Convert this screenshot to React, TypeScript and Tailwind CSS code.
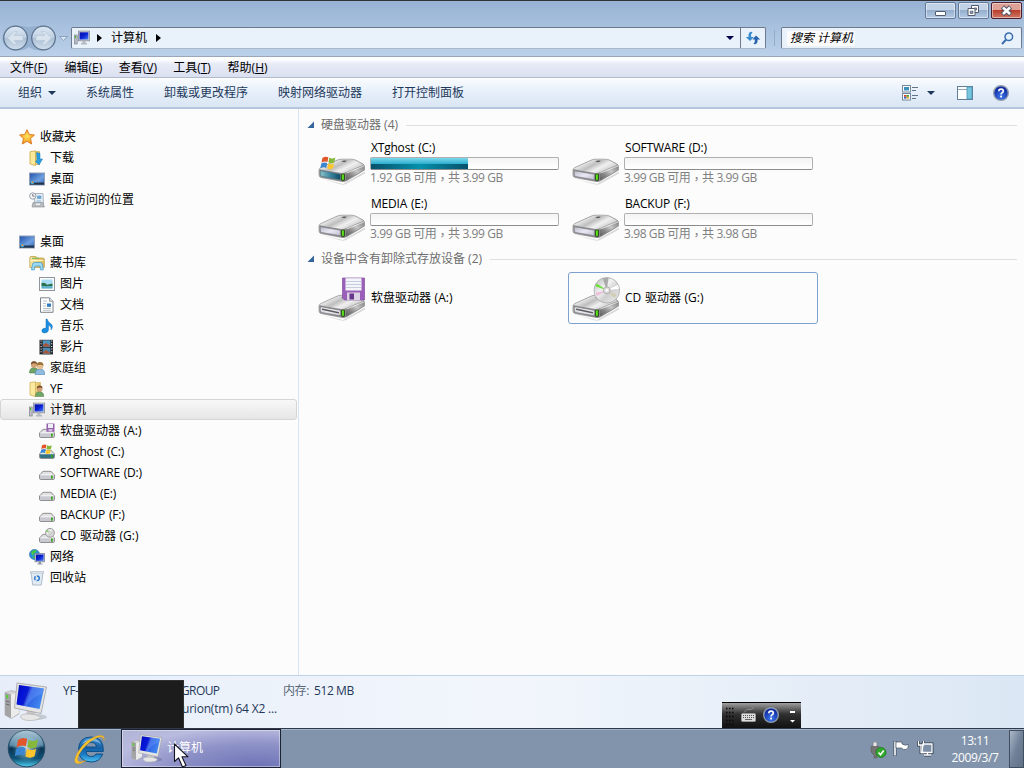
import React from "react";

type IconProps = { className?: string };

function Gradients() {
  return (
    <svg className="absolute size-0" aria-hidden="true">
      <defs>
        <linearGradient id="metal" x1="0" y1="0" x2="1" y2="1">
          <stop offset="0" stopColor="#b0b0b0" />
          <stop offset=".35" stopColor="#e2e2e2" />
          <stop offset=".55" stopColor="#bcbcbc" />
          <stop offset=".75" stopColor="#858585" />
          <stop offset="1" stopColor="#5a5a5a" />
        </linearGradient>
        <linearGradient id="lid" x1="0" y1="0" x2="1" y2=".6">
          <stop offset="0" stopColor="#acacac" />
          <stop offset=".3" stopColor="#e6e6e6" />
          <stop offset=".5" stopColor="#bebebe" />
          <stop offset=".7" stopColor="#f0f0f0" />
          <stop offset="1" stopColor="#c6c6c6" />
        </linearGradient>
        <linearGradient id="side" x1="0" y1="1" x2="1" y2="0">
          <stop offset="0" stopColor="#5f5f5f" />
          <stop offset=".3" stopColor="#858585" />
          <stop offset=".6" stopColor="#c6c6c6" />
          <stop offset="1" stopColor="#828282" />
        </linearGradient>
        <linearGradient id="face" x1="0" y1="0" x2="1" y2="1">
          <stop offset="0" stopColor="#b9b9c8" />
          <stop offset=".5" stopColor="#e9e8f4" />
          <stop offset="1" stopColor="#bdbdcc" />
        </linearGradient>
        <linearGradient id="teal" x1="0" y1="0" x2="1" y2="0">
          <stop offset="0" stopColor="#8fc0ca" />
          <stop offset=".5" stopColor="#3a87a0" />
          <stop offset="1" stopColor="#0f4c64" />
        </linearGradient>
        <linearGradient id="screen" x1="0" y1="0" x2="1" y2=".35">
          <stop offset="0" stopColor="#0008a8" />
          <stop offset=".3" stopColor="#0414d8" />
          <stop offset=".5" stopColor="#0a1cd0" />
          <stop offset=".56" stopColor="#2f5fe6" />
          <stop offset="1" stopColor="#3f86ee" />
        </linearGradient>
        <linearGradient id="smallScreen" x1="0" y1="0" x2="1" y2="1">
          <stop offset="0" stopColor="#0510a0" />
          <stop offset=".5" stopColor="#0a20d4" />
          <stop offset="1" stopColor="#4a80f0" />
        </linearGradient>
        <linearGradient id="desk" x1="0" y1="0" x2="1" y2="1">
          <stop offset="0" stopColor="#1e4fa8" />
          <stop offset=".6" stopColor="#6fa0e0" />
          <stop offset="1" stopColor="#2f62b4" />
        </linearGradient>
        <linearGradient id="folder" x1="0" y1="0" x2="1" y2="0">
          <stop offset="0" stopColor="#f7e9a6" />
          <stop offset="1" stopColor="#dcb958" />
        </linearGradient>
        <linearGradient id="orb" x1="0" y1="0" x2="0" y2="1">
          <stop offset="0" stopColor="#9dbccd" />
          <stop offset=".4" stopColor="#3d7596" />
          <stop offset=".5" stopColor="#0b3654" />
          <stop offset=".78" stopColor="#0f5478" />
          <stop offset="1" stopColor="#4ed2f2" />
        </linearGradient>
        <radialGradient id="orbGlow">
          <stop offset="0" stopColor="#fff" stopOpacity=".75" />
          <stop offset="1" stopColor="#9fe0ff" stopOpacity="0" />
        </radialGradient>
        <linearGradient id="navBall" x1="0" y1="0" x2="0" y2="1">
          <stop offset="0" stopColor="#dce7f3" />
          <stop offset=".48" stopColor="#c0d0e2" />
          <stop offset=".5" stopColor="#aabed4" />
          <stop offset="1" stopColor="#d2e0ee" />
        </linearGradient>
        <radialGradient id="blueBall" cx=".5" cy=".75" r=".7">
          <stop offset="0" stopColor="#3c78ee" />
          <stop offset="1" stopColor="#0a1f96" />
        </radialGradient>
        <linearGradient id="ie" x1="0" y1="0" x2="0" y2="1">
          <stop offset="0" stopColor="#3c8fd0" />
          <stop offset=".45" stopColor="#1560a6" />
          <stop offset=".7" stopColor="#1b7cc4" />
          <stop offset="1" stopColor="#4cc4f2" />
        </linearGradient>
        <radialGradient id="star" cx=".5" cy=".45" r=".6">
          <stop offset="0" stopColor="#ffe45c" />
          <stop offset="1" stopColor="#f38a18" />
        </radialGradient>
        <linearGradient id="disc" x1="0" y1="0" x2="1" y2="1">
          <stop offset="0" stopColor="#b5b5b5" />
          <stop offset=".4" stopColor="#f2f2f2" />
          <stop offset=".6" stopColor="#cfcfcf" />
          <stop offset="1" stopColor="#f0f0f0" />
        </linearGradient>
      </defs>
    </svg>
  );
}

function Flag() {
  return (
    <>
      <path d="M2 2Q5-.2 8.300 1.300L7.300 6.300Q4.200 5 1 7Z" fill="#e2562c" />
      <path d="M9.200 1.800Q12.500 3.600 15.600 1.600L14.500 6.800Q11.500 8.400 8.300 6.800Z" fill="#84b93c" />
      <path d="M.8 8Q4 6 7.100 7.400L6.100 12.500Q3 11.200-.2 13Z" fill="#3b86d0" />
      <path d="M8.100 7.900Q11.200 9.500 14.300 7.900L13.200 13Q10.200 14.800 7 13.200Z" fill="#fcc62c" />
    </>
  );
}

function DriveBody({ teal, slot }: { teal?: boolean; slot?: boolean }) {
  return (
    <>
      <path d="M4 21L25 26L47 13.500V15.500L28 26Q26 27.200 22 26.300Z" fill="#000" opacity=".14" />
      <path d="M1 12Q1 10.500 3 9.500L19 2.200Q21 1.200 24 1.200H33Q36 1.200 38 2.300L45 6Q46.500 7 46.500 8.500V12L29 22.500Q27 24 24 23.500L3 19.500Q1 19 1 17Z" fill="url(#metal)" stroke="#8a8a8a" strokeWidth=".7" />
      <path d="M2.500 10.300L20 2.600Q22 1.700 25 1.700H32.500Q35.500 1.700 37.500 2.700L45 6.700L27 14.300Q25 15.300 22 14.800L2.500 11.500Z" fill="url(#lid)" />
      <path d="M28 14.800L46 7.600V11.800L28 22.300Z" fill="url(#side)" />
      <path d="M28.500 15L46 8" stroke="#fff" strokeWidth=".9" opacity=".7" />
      <path d="M23 3.300Q26 1.800 29 2.800L26.500 4.200Z" fill="#555" />
      <path d="M1.400 11.300L21 14.800Q25 15.500 28 14.600V22.300Q26 23.800 24 23.300L3 19.300Q1.400 18.800 1.400 17Z" fill="#8b8b8d" />
      <path d="M2.300 12.700L22.300 16.300V21.800L3.600 18.400Q2.300 18 2.300 16.500Z" fill={teal ? "url(#teal)" : "url(#face)"} stroke={teal ? "#41707e" : "#77777f"} strokeWidth=".6" />
      {slot && (
        <>
          <path d="M4.500 15.200L20.500 18.700" stroke="#e8e8e8" strokeWidth="3.600" strokeLinecap="round" />
          <path d="M4.500 15.200L20.500 18.700" stroke="#5b5b60" strokeWidth="1.500" strokeLinecap="round" />
        </>
      )}
      <rect x="23.100" y="15.700" width="3.800" height="7" rx="1" fill="#254414" />
      <rect x="23.900" y="16.400" width="2" height="5.400" fill="#5be01c" />
    </>
  );
}

function BigDrive({ kind }: { kind: string }) {
  const media = kind === "floppy" || kind === "cd";
  return (
    <svg className="h-12 w-12 shrink-0" viewBox="0 0 48 48">
      <g transform={media ? "translate(0 20)" : "translate(0 18)"}>
        <DriveBody teal={kind === "system"} slot={media} />
      </g>
      {kind === "system" && (
        <g transform="translate(2.500 16) scale(.95)">
          <Flag />
        </g>
      )}
      {kind === "floppy" && (
        <g>
          <path d="M24.500 4H46.500V26H26.500L24.500 24Z" fill="#9a5fb8" stroke="#8350a2" strokeWidth=".7" />
          <rect x="27.500" y="4.200" width="16" height="12.300" fill="#f3f5fa" />
          <path d="M28 7.500H43M28 10.500H43M28 13.500H43" stroke="#b8c4d6" strokeWidth=".8" />
          <rect x="29" y="18.500" width="13" height="7.500" fill="#dcd3e4" />
          <rect x="31.500" y="19.500" width="4.500" height="6" fill="#65378a" />
        </g>
      )}
      {kind === "cd" && (
        <g transform="translate(-.5 .8)">
          <circle cx="35.300" cy="15.500" r="12.800" fill="url(#disc)" stroke="#aaa" strokeWidth=".8" />
          <path d="M35.300 15.500L23.800 11.500L25.300 8.600Z" fill="#6ee03c" />
          <path d="M35.300 15.500L24 18L25.500 21.500Z" fill="#eac0dc" />
          <path d="M35.300 15.500L46.500 10L47.500 14Z" fill="#fff" />
          <path d="M35.300 15.500L45.500 20L43 23.500Z" fill="#d2cdb4" />
          <path d="M35.300 15.500L31 3.500L37 3Z" fill="#aaa" />
          <circle cx="35.300" cy="15.500" r="3.400" fill="#ddd" stroke="#999" strokeWidth=".7" />
          <circle cx="35.300" cy="15.500" r="1.300" fill="#fff" />
        </g>
      )}
    </svg>
  );
}

function BigComputer({ className }: IconProps) {
  return (
    <svg className={className} viewBox="0 0 44 40">
      <ellipse cx="32" cy="35" rx="11" ry="3" fill="#000" opacity=".15" />
      <path d="M1 10.500L8 8.500L15 11V32L7 36.500L1 33Z" fill="#d4d4d4" stroke="#a5a5a5" strokeWidth=".6" />
      <path d="M1 10.500L7 12.500V36L1 33Z" fill="#a4a4a6" />
      <path d="M7 12.500L15 10.500V31L7 36Z" fill="#ececec" />
      <rect x="2" y="13" width="2.200" height="3.200" fill="#58cf32" />
      <path d="M2 19L5.500 20M2 22L5.500 23" stroke="#666" />
      <path d="M23 27L31 29L32 35L22 34Z" fill="#c7c7c7" />
      <path d="M16.500 35Q17 31.500 25 32Q35 32.500 36.500 35.500Q34 38.500 26 38.500Q18 38.500 16.500 35Z" fill="#e6e6e6" stroke="#b0b0b0" strokeWidth=".7" />
      <path d="M13 1L42.500 5L37 31.500L10.500 26Z" fill="#e4e4e4" stroke="#a0a0a0" strokeWidth=".8" />
      <path d="M15 3L40 6.500L35.500 27L12.500 22.500Z" fill="url(#screen)" />
      <path d="M26 4.600L40 6.500L38.800 12Q29 14 22 24.300L19 23.700Z" fill="#7fa8ff" opacity=".3" />
    </svg>
  );
}

function Icon({ name }: { name: string }) {
  const drive = (
    <>
      <path d="M2.500 8Q3 6.300 5 6.300H11Q13 6.300 13.500 8L15.500 10V13Q15.500 14.500 14 14.500H2Q.5 14.500.5 13V10Z" fill="#e2e2e5" stroke="#858585" strokeWidth=".9" />
      <rect x="1" y="9.700" width="14" height="4.300" rx="1" fill={name === "system" ? "#347184" : "#c9c9d2"} />
      <path d="M1.500 9.800H14.500" stroke="#fff" strokeWidth=".8" />
      <rect x="12" y="10.500" width="1.700" height="3.200" fill="#38a51e" />
    </>
  );
  let art: React.ReactNode = drive;
  if (name === "star")
    art = <path d="M8 .7L10.200 5.400L15.400 6L11.600 9.500L12.600 15L8 12.300L3.400 15L4.400 9.500L.6 6L5.800 5.400Z" fill="url(#star)" stroke="#d9761c" strokeWidth=".9" strokeLinejoin="round" />;
  if (name === "download")
    art = (
      <>
        <path d="M5 1.500H10.500V14.500H5Z" fill="url(#folder)" stroke="#cba746" strokeWidth=".6" />
        <path d="M1 1.800L6.500 .8V15.500L1 14Z" fill="#fae99b" stroke="#cba746" strokeWidth=".8" />
        <path d="M7.500 2.500L11 3.500V9H13.500L10 15L6.500 11.500L8 10Z" fill="#2b9de2" stroke="#1876b6" strokeWidth=".5" />
      </>
    );
  if (name === "desktop")
    art = (
      <>
        <rect x=".5" y="2" width="15" height="12" fill="url(#desk)" stroke="#91a0b8" />
        <rect x="1" y="11.500" width="14" height="2.200" fill="#22354c" />
        <circle cx="3.300" cy="11.500" r="1.800" fill="#45b5e0" />
        <circle cx="3.500" cy="11.200" r=".9" fill="#f27a2c" />
      </>
    );
  if (name === "recent")
    art = (
      <>
        <path d="M5 1.500H14L14.500 12H6Z" fill="#e6edf3" stroke="#98a5b2" strokeWidth=".8" />
        <path d="M8.500 4H12V6.500H8.500ZM7.500 9H12" fill="#6ca7d8" stroke="#6ca7d8" strokeWidth=".8" />
        <path d="M4 10.500H13.500L15.500 15H3Z" fill="#b9bcbf" stroke="#85898e" strokeWidth=".6" />
        <path d="M7 11.500H11V13H7Z" fill="#e8f4fa" />
        <circle cx="3.800" cy="4" r="3.200" fill="#f4f4f4" stroke="#98a3ae" />
        <path d="M3.800 2V4.200H5.500" fill="none" stroke="#445" strokeWidth=".7" />
      </>
    );
  if (name === "library")
    art = (
      <>
        <path d="M.8 3Q.8 1.500 2 1.500H7L8 3H14.500L15.300 4V12.500H.8Z" fill="url(#folder)" stroke="#c3a04a" strokeWidth=".8" />
        <path d="M3 3.300H10" stroke="#6fb24b" />
        <path d="M1.500 5.500H14.500" stroke="#fff3bd" />
        <path d="M2.500 14.800L3.500 9Q4 7.500 5.500 7.500H11.500Q13 7.500 13.300 9L14.300 14.800H11.500L11 11H6L5.300 14.800Z" fill="#9bdaf4" stroke="#4a9cc8" strokeWidth=".8" />
      </>
    );
  if (name === "picture")
    art = (
      <>
        <rect x=".5" y="1.500" width="15" height="13" fill="#fff" stroke="#8f959b" />
        <rect x="2.500" y="3.500" width="11" height="9" fill="#a8dbf5" />
        <path d="M2.500 7Q6 6 8 8.800L13.500 7.500V10H2.500Z" fill="#2d714c" />
        <path d="M2.500 10H13.500V12.500H2.500Z" fill="#5fb0cc" />
      </>
    );
  if (name === "document")
    art = (
      <>
        <path d="M1.500 .8H10.500L14 4.300V15.300H1.500Z" fill="#fff" stroke="#7d848c" />
        <path d="M10.500.8V4.300H14" fill="#dde3e9" stroke="#7d848c" strokeWidth=".8" />
        <path d="M4 4H8M4 6.500H7M4 9H7M4 11.500H12M4 13.300H12" stroke="#a8b3bf" strokeWidth=".8" />
        <rect x="8" y="6.500" width="4" height="3.300" fill="#2f7ac0" />
      </>
    );
  if (name === "music")
    art = <path d="M8 1Q9 4 11.500 5.500Q15 8 12 12Q13 8.500 9.500 7V11.500Q9.500 14.500 6 15Q2.800 15 2.800 12.700Q3 10 7 10V1Z" fill="#1c8ee0" stroke="#1270b8" strokeWidth=".5" />;
  if (name === "film")
    art = (
      <>
        <rect x=".5" y=".8" width="13.500" height="14.700" fill="#232529" />
        <rect x="3.700" y="1.300" width="7.600" height="6.500" fill="#5194bf" />
        <rect x="3.700" y="8.700" width="7.600" height="6.300" fill="#4b88ae" />
        <path d="M4 6L7 4L11 6.500V7.500H4ZM4 13L7 11L11 13.500V14.500H4Z" fill="#a95637" />
        <path d="M2.100 1.500V15.500M12.700 1.500V15.500" stroke="#e8e8e8" strokeWidth="1.100" strokeDasharray="1 1.700" />
      </>
    );
  const people = (
    <>
      <path d="M.5 13Q.5 7.500 5 7.500Q9.500 8 9.500 13Z" fill="#6fa568" stroke="#46743f" strokeWidth=".5" />
      <circle cx="5" cy="4.700" r="3.100" fill="#d4a074" />
      <path d="M2 4.500Q2 1 5 1.200Q8 1 8 4Q5 2.300 2 4.500Z" fill="#76502d" />
    </>
  );
  if (name === "homegroup")
    art = (
      <>
        {people}
        <path d="M6 14.500Q6 9 11 9Q15.800 9 15.800 14.500Z" fill="#8fbbe0" stroke="#43749f" strokeWidth=".5" />
        <circle cx="11" cy="6" r="3.300" fill="#e4bd92" />
        <path d="M7.700 5.700Q7.800 1.800 11 2Q14.500 2 14.500 5.700Q11 3.700 7.700 5.700Z" fill="#9d7235" />
      </>
    );
  if (name === "user")
    art = (
      <>
        <path d="M4.500 1.500H11.500V14.800H4.500Z" fill="url(#folder)" stroke="#caa94c" strokeWidth=".5" />
        <path d="M1 1.500L6.500 .8V15.500L1 14Z" fill="#faeaa0" stroke="#caa94c" strokeWidth=".7" />
        <g transform="translate(6 3.500) scale(.93)">{people}</g>
      </>
    );
  if (name === "computer")
    art = (
      <>
        <rect x=".4" y="5" width="2.800" height="9" fill="#b9bdc2" stroke="#777d85" strokeWidth=".6" />
        <rect x="1" y="6" width="1" height="2" fill="#37c324" />
        <rect x="4.400" y="1.100" width="11.200" height="9.700" fill="#d5d8dd" stroke="#858c98" strokeWidth=".8" />
        <rect x="5.600" y="2.300" width="8.800" height="7.200" fill="url(#smallScreen)" />
        <path d="M8.500 11H11.500V13H13V14.500H7V13H8.500Z" fill="#b4bac0" />
      </>
    );
  if (name === "floppy")
    art = (
      <>
        {drive}
        <rect x="7.500" y=".5" width="8" height="8.300" fill="#9460ae" />
        <rect x="9" y="1" width="5" height="4" fill="#eef0f6" />
        <rect x="9.500" y="6" width="4" height="2.500" fill="#d0bfdd" />
      </>
    );
  if (name === "system")
    art = (
      <>
        {drive}
        <g transform="translate(1.500 0) scale(.72)">
          <Flag />
        </g>
      </>
    );
  if (name === "cd")
    art = (
      <>
        {drive}
        <circle cx="11" cy="4.800" r="4.400" fill="url(#disc)" stroke="#888" strokeWidth=".8" />
        <path d="M11 4.800L7.200 3.600L8 2Z" fill="#74cf57" />
        <circle cx="11" cy="4.800" r="1.200" fill="#fff" stroke="#999" strokeWidth=".5" />
      </>
    );
  if (name === "network")
    art = (
      <>
        <circle cx="5.500" cy="5.500" r="5" fill="#2b8fdd" stroke="#1765a1" strokeWidth=".6" />
        <path d="M2 3Q5 0 8 1.500Q7 4 5 4Q5 7 3 6ZM3 8L6 7L6.500 10Z" fill="#48c549" />
        <rect x="6" y="4.500" width="9.600" height="8.300" fill="#d0d6df" stroke="#69758a" strokeWidth=".7" />
        <rect x="7" y="5.500" width="7.600" height="6.300" fill="url(#smallScreen)" />
        <path d="M9.500 13H12V14.500H13.500V15.500H8.500V14.500H9.500Z" fill="#8d97a4" />
      </>
    );
  if (name === "trash")
    art = (
      <>
        <path d="M2 2.500H14L12.300 15H3.700Z" fill="#e2ebf3" stroke="#9eafbf" strokeWidth=".8" />
        <path d="M1.500 1.500H14.500V3H1.500Z" fill="#f5f8fb" stroke="#9eafbf" strokeWidth=".6" />
        <circle cx="8" cy="8.300" r="2.300" fill="none" stroke="#2f7bd4" strokeWidth="1.500" strokeDasharray="3.600 1.200" />
      </>
    );
  return (
    <svg className="size-4 shrink-0" viewBox="0 0 16 16">
      {art}
    </svg>
  );
}

function Help({ className }: IconProps) {
  return (
    <svg className={className} viewBox="0 0 16 16">
      <circle cx="8" cy="8" r="7.300" fill="url(#blueBall)" stroke="#8e9ab0" strokeWidth="1.400" />
      <path d="M5.800 6.200Q5.800 4.100 8.100 4.100Q10.300 4.100 10.300 6Q10.300 7.200 9.100 7.800Q8.100 8.300 8.100 9.400" fill="none" stroke="#fff" strokeWidth="1.600" />
      <rect x="7.200" y="10.600" width="1.800" height="1.800" fill="#fff" />
    </svg>
  );
}

const menus = [
  ["文件", "F"],
  ["编辑", "E"],
  ["查看", "V"],
  ["工具", "T"],
  ["帮助", "H"],
];

type Row = [string, string, number, boolean?];
const favourites: Row[] = [
  ["star", "收藏夹", 0],
  ["download", "下载", 1],
  ["desktop", "桌面", 1],
  ["recent", "最近访问的位置", 1],
];
const tree: Row[] = [
  ["desktop", "桌面", 0],
  ["library", "藏书库", 1],
  ["picture", "图片", 2],
  ["document", "文档", 2],
  ["music", "音乐", 2],
  ["film", "影片", 2],
  ["homegroup", "家庭组", 1],
  ["user", "YF", 1],
  ["computer", "计算机", 1, true],
  ["floppy", "软盘驱动器 (A:)", 2],
  ["system", "XTghost (C:)", 2],
  ["drive", "SOFTWARE (D:)", 2],
  ["drive", "MEDIA (E:)", 2],
  ["drive", "BACKUP (F:)", 2],
  ["cd", "CD 驱动器 (G:)", 2],
  ["network", "网络", 1],
  ["trash", "回收站", 1],
];
const indents = ["pl-[18px]", "pl-7", "pl-[38px]"];

function Label({ text }: { text: string }) {
  const hasCjk = /[\u4e00-\u9fff]/.test(text);
  return <span className={hasCjk ? "[word-spacing:0.5px]" : "tracking-[-0.2px] [word-spacing:1px]"}>{text}</span>;
}

function TreeRow({ row: [icon, label, depth, active] }: { row: Row }) {
  return (
    <div
      className={
        "flex h-[21px] w-[297px] items-center gap-[5px] rounded-[3px] border " +
        (active ? "border-[#d5d5d5] bg-linear-to-b from-[#f8f8f8] to-[#e6e6e6] " : "border-transparent ") +
        indents[depth]
      }
    >
      <Icon name={icon} />
      <Label text={label} />
    </div>
  );
}

type Drive = { kind: string; name: string; free?: string; total?: string; used?: number; active?: boolean };
const disks: Drive[] = [
  { kind: "system", name: "XTghost (C:)", free: "1.92 GB", total: "3.99 GB", used: 97 },
  { kind: "drive", name: "SOFTWARE (D:)", free: "3.99 GB", total: "3.99 GB" },
  { kind: "drive", name: "MEDIA (E:)", free: "3.99 GB", total: "3.99 GB" },
  { kind: "drive", name: "BACKUP (F:)", free: "3.98 GB", total: "3.98 GB" },
];
const removable: Drive[] = [
  { kind: "floppy", name: "软盘驱动器 (A:)" },
  { kind: "cd", name: "CD 驱动器 (G:)", active: true },
];

function DriveTile({ drive }: { drive: Drive }) {
  return (
    <div
      className={
        "flex h-[52px] w-[250px] items-center gap-1 rounded-[3px] border pl-[3px] " +
        (drive.active ? "border-[#7da2ce]" : "border-transparent")
      }
    >
      <BigDrive kind={drive.kind} />
      {drive.free ? (
        <div className="flex flex-col pb-px">
          <span className="h-[17px] pl-px leading-[15px]">
            <Label text={drive.name} />
          </span>
          <div className="h-[13px] w-[189px] rounded-[2px] border border-[#b0b0b0] border-b-[#8c8c8c] bg-linear-to-b from-[#f4f4f4] to-white">
            {!!drive.used && (
              <div
                className="flex h-[11px] flex-col justify-end bg-linear-to-b from-[#7ad9ee] from-0% to-[#2fb0d0] to-50%"
                style={{ width: drive.used }}
              >
                <div className="h-[5px] bg-linear-to-r from-[#07506a] via-[#0591ac] to-[#07506a]" />
              </div>
            )}
          </div>
          <span className="h-[17px] leading-[15px] tracking-[-0.4px] text-[#808080]">
            {drive.free} 可用<span className="relative top-[2px] leading-none [font-family:'Noto_Sans_CJK_TC']">，</span>共 {drive.total}
          </span>
        </div>
      ) : (
        <span className="pl-px">
          <Label text={drive.name} />
        </span>
      )}
    </div>
  );
}

function GroupHeader({ label }: { label: string }) {
  return (
    <div className="flex h-4 items-center">
      <svg className="mr-[6px] h-2 w-2" viewBox="0 0 8 8">
        <path d="M7 .5V7H.5Z" fill="#35659b" />
      </svg>
      <span className="text-[#6d6d6d]">{label}</span>
      <div className="mr-[7px] ml-2 h-px flex-1 bg-[#dfdfdf]" />
    </div>
  );
}

function WindowButton({ kind }: { kind: string }) {
  const close = kind === "close";
  return (
    <div
      className={
        "flex h-[17px] w-[31px] items-center justify-center rounded-[2px] border shadow-[inset_0_0_0_1px_rgba(255,255,255,0.45)] " +
        (close
          ? "border-[#4c1d2c] bg-linear-to-b from-[#dfa196] from-45% via-[#b83e2b] via-50% to-[#cf7766]"
          : "border-[#64799a] bg-linear-to-b from-[#c2d3e7] from-45% via-[#94aecd] via-50% to-[#b5cce5]")
      }
    >
      <svg className="h-[13px] w-[13px]" viewBox="0 0 13 13">
        {kind === "min" && <rect x="1.500" y="7.500" width="10" height="4" rx=".5" fill="#fff" stroke="#535b6c" />}
        {kind === "max" && (
          <>
            <path d="M4.500 1.500H11.500V8.500H4.500Z" fill="#fff" stroke="#535b6c" />
            <path d="M7 4H9.500V6H7Z" fill="#9cb2cc" stroke="#535b6c" strokeWidth=".8" />
            <path d="M1 4.500H8V11.500H1Z" fill="#fff" stroke="#535b6c" />
            <path d="M3.300 7.200H5.900V9.400H3.300Z" fill="#9cb2cc" stroke="#535b6c" strokeWidth=".9" />
          </>
        )}
        {close && (
          <>
            <path d="M2.500 3L10.500 10.500M10.500 3L2.500 10.500" stroke="#535666" strokeWidth="4.600" />
            <path d="M3 3.500L10 10M10 3.500L3 10" stroke="#fff" strokeWidth="2.500" />
          </>
        )}
      </svg>
    </div>
  );
}

export default function App() {
  return (
    <div className="relative flex h-[768px] w-[1024px] flex-col overflow-hidden bg-[#fcfcfc] text-[12px] leading-4 whitespace-nowrap text-black [font-family:'Open_Sans','Noto_Sans_CJK_SC',sans-serif]">
      <Gradients />
      <header className="flex h-[57px] shrink-0 flex-col border-t border-b border-t-[#333337] border-b-[#9aa7ba] bg-linear-to-b from-[#97b2d3] to-[#bbd1ea]">
        <div className="flex h-[24px] justify-end gap-[2px] pt-px pr-[2px]">
          <WindowButton kind="min" />
          <WindowButton kind="max" />
          <WindowButton kind="close" />
        </div>
        <div className="flex h-[26px] items-center">
          <svg className="h-7 w-[70px] shrink-0" viewBox="0 0 70 28">
            <path d="M15 1.500Q22 1.500 29 3Q36 1.500 43 1.500A12.500 12.500 0 0 1 43 26.500Q34 27 29 23Q24 27 15 26.500A12.500 12.500 0 0 1 15 1.500Z" fill="#8ea9c8" opacity=".75" />
            <circle cx="15.500" cy="14" r="11.800" fill="url(#navBall)" stroke="#5e7590" strokeWidth="1.300" />
            <circle cx="43.500" cy="14" r="11.800" fill="url(#navBall)" stroke="#5e7590" strokeWidth="1.300" />
            <path d="M7.500 14L14 7.500H17.500L14 11.500H23V16.500H14L17.500 20.500H14Z" fill="#d8e3ee" stroke="#b6c7d9" strokeWidth=".7" />
            <path d="M51.500 14L45 7.500H41.500L45 11.500H36V16.500H45L41.500 20.500H45Z" fill="#d8e3ee" stroke="#b6c7d9" strokeWidth=".7" />
            <path d="M59.500 12.500H67.500L63.500 16.500Z" fill="#d8e5f3" stroke="#8198b4" strokeWidth=".8" />
          </svg>
          <div className="ml-px flex h-[22px] w-[695px] shrink-0 items-center rounded-[2px] border border-[#6e7a8c] border-b-[#a9b8ca] bg-[#e9f1fa]">
            <div className="ml-[2px] flex">
              <Icon name="computer" />
            </div>
            <svg className="ml-[7px] h-2 w-[5px]" viewBox="0 0 5 8">
              <path d="M0 0L5 4L0 8Z" />
            </svg>
            <span className="ml-[9px] w-9">计算机</span>
            <svg className="ml-[9px] h-2 w-[5px]" viewBox="0 0 5 8">
              <path d="M0 0L5 4L0 8Z" />
            </svg>
            <div className="flex-1" />
            <svg className="mr-[6px] h-1 w-2" viewBox="0 0 8 4">
              <path d="M0 0H8L4 4Z" fill="#000050" />
            </svg>
            <div className="flex h-5 w-[25px] items-center justify-center border-l border-[#6e7a8c]">
              <svg className="h-[14px] w-4" viewBox="0 0 16 14">
                <path d="M6 .8Q3 1.500 3.500 6H.8L5 10L9 6H6.300Q5.500 3.500 7.500 1Z" fill="#3a8bd0" />
                <path d="M10 13.200Q13 12.500 12.500 8.500H15.200L11 4.500L7.500 8.500H9.800Q10.500 11 8.500 13Z" fill="#2763ac" />
              </svg>
            </div>
          </div>
          <div className="ml-2 h-4 w-px bg-[#93acc9]" />
          <div className="ml-[6px] flex h-[22px] w-[241px] items-center justify-between rounded-[2px] border border-[#6e7a8c] border-b-[#a9b8ca] bg-[#e9f1fa] pr-[7px] pl-[5px]">
            <span className="h-[15px] w-[68px] bg-[#fcfcfd] pl-[3px] leading-[14px] italic">搜索 计算机</span>
            <svg className="size-[13px]" viewBox="0 0 13 13">
              <circle cx="7.800" cy="4.800" r="3.800" fill="#e4f1ff" stroke="#3c6fae" strokeWidth="1.500" />
              <path d="M5 7.800L1 12" stroke="#3c6fae" strokeWidth="2" />
            </svg>
          </div>
        </div>
      </header>

      <nav className="flex h-[21px] shrink-0 items-center border-b border-[#b3bccd] bg-linear-to-b from-white from-10% via-[#e7ebf6] via-35% to-[#dbe0f1] pt-px pl-[10px]">
        {menus.map(([label, key]) => (
          <span key={key} className="w-[54.400px]">
            {label}(<u className="underline-offset-1">{key}</u>)
          </span>
        ))}
      </nav>

      <div className="flex h-[31px] shrink-0 items-center border-b-2 border-[#b5c6dd] bg-linear-to-b from-[#fafcfe] via-[#e6effa] to-[#dae6f4] pl-[18px] text-[#1e395b]">
        <span className="w-6">组织</span>
        <svg className="ml-[6px] h-1 w-2" viewBox="0 0 8 4">
          <path d="M0 0H8L4 4Z" fill="#1e395b" />
        </svg>
        <span className="ml-[30px] w-[78px]">系统属性</span>
        <span className="w-[114px]">卸载或更改程序</span>
        <span className="w-[114px]">映射网络驱动器</span>
        <span className="w-[72px]">打开控制面板</span>
        <div className="flex-1" />
        <svg className="h-4 w-[17px]" viewBox="0 0 17 16">
          <rect x=".5" y=".5" width="8" height="6.500" fill="#fff" stroke="#75899d" />
          <rect x="2" y="2" width="5" height="3.500" fill="#3e91bd" />
          <rect x=".5" y="8.500" width="8" height="6.500" fill="#fff" stroke="#75899d" />
          <path d="M2 10H4.500V11.800H2Z" fill="#df432d" />
          <path d="M4.500 10H7V11.800H4.500Z" fill="#41a838" />
          <path d="M2 11.800H4.500V13.600H2Z" fill="#3761c8" />
          <path d="M4.500 11.800H7V13.600H4.500Z" fill="#e3a429" />
          <path d="M10 2.500H16M10 5.500H14M10 10.500H16M10 13.500H14" stroke="#60758a" />
        </svg>
        <svg className="ml-[8px] h-1 w-2" viewBox="0 0 8 4">
          <path d="M0 0H8L4 4Z" fill="#1e395b" />
        </svg>
        <svg className="ml-[22px] h-[14px] w-4" viewBox="0 0 16 14">
          <rect x=".5" y=".5" width="15" height="13" fill="#fff" stroke="#647e98" />
          <path d="M1 3.500H10" stroke="#8da4ba" />
          <rect x="10" y="1" width="5" height="12" fill="#77c5df" stroke="#4c93b3" strokeWidth=".8" />
        </svg>
        <Help className="mr-[15px] ml-5 size-4" />
      </div>

      <main className="flex min-h-0 flex-1">
        <aside className="w-[299px] shrink-0 border-r border-[#d6e4f5] pt-[17px]">
          {favourites.map((row, i) => (
            <TreeRow key={i} row={row} />
          ))}
          <div className="h-[21px]" />
          {tree.map((row, i) => (
            <TreeRow key={i} row={row} />
          ))}
        </aside>
        <section className="flex min-w-0 flex-1 flex-col pt-2 pl-2">
          <GroupHeader label="硬盘驱动器 (4)" />
          <div className="mt-[5px] ml-[7px] grid w-[504px] grid-cols-2 gap-1">
            {disks.map((d) => (
              <DriveTile key={d.name} drive={d} />
            ))}
          </div>
          <div className="h-[5px]" />
          <GroupHeader label="设备中含有卸除式存放设备 (2)" />
          <div className="mt-[5px] ml-[7px] grid w-[504px] grid-cols-2 gap-1">
            {removable.map((d) => (
              <DriveTile key={d.name} drive={d} />
            ))}
          </div>
        </section>
      </main>

      <footer className="flex h-[53px] shrink-0 border-t border-[#c0d2ea] bg-linear-to-r from-[#e7eef9] via-[#f2f6fc] to-[#dbe7f4] pt-[6px] pl-1 text-[#1e395b]">
        <BigComputer className="h-10 w-11" />
        <div className="ml-[15px] flex w-[220px] flex-col gap-[2px] pt-px tracking-[-0.3px]">
          <div className="flex">
            <span className="w-[118px]">YF-</span>
            <span className="tracking-[-0.6px]">GROUP</span>
          </div>
          <span className="pl-[119px] tracking-[-0.2px]">urion(tm) 64 X2 ...</span>
        </div>
        <div className="flex h-4 gap-[5px] pt-px tracking-[-0.4px]">
          <span className="text-[#5a6779]">内存:</span>
          <span>512 MB</span>
        </div>
      </footer>

      <div className="flex h-10 shrink-0 items-center border-t border-[#30394a] bg-[#8294ab] text-white shadow-[inset_0_1px_0_#a4b4ca]">
        <svg className="ml-[7px] size-[39px]" viewBox="0 0 39 39">
          <circle cx="19.500" cy="19.500" r="18.300" fill="url(#orb)" stroke="#264c67" />
          <path d="M3 17A16.500 16.500 0 0 1 36 17Q20 23 3 17Z" fill="#fff" opacity=".18" />
          <circle cx="19.500" cy="19" r="14" fill="url(#orbGlow)" />
          <g transform="translate(8 8) scale(1.480)">
            <Flag />
          </g>
        </svg>
        <svg className="ml-[27px] h-8 w-8" viewBox="0 0 32 32">
          <path d="M30.300 18.500H13Q13.500 23.500 18.500 23.500Q22 23.500 23 21H29.700Q27 29 18 29Q5.500 28.500 5.500 16.500Q6 4 18 4Q31 4 30.300 18.500ZM13 14H23.500Q23 9.500 18.300 9.500Q13.700 9.500 13 14Z" fill="url(#ie)" stroke="#114f88" strokeWidth="1" />
          <path d="M9 11.500Q11 6.500 17.500 5.500Q26 5 28 11.500Q24 7.500 18 8Q12 8.500 9 11.500Z" fill="#bfe2f6" opacity=".5" />
          <path d="M31 7.500Q32.500 .8 24 3Q13 6.500 5.500 18Q-1 29 4 30.500Q8 31 13 27.500Q7 30 5 28Q3 25 9.500 16Q17 7.500 24.500 4.500Q31 2.300 31 7.500Z" fill="#fcc62c" stroke="#dd9f1c" strokeWidth=".5" />
        </svg>
        <div className="ml-4 flex h-[39px] w-40 items-center border border-[#1c2234] bg-[radial-gradient(ellipse_at_85%_100%,#6d72b6_0%,#8f93c8_45%,#b9bbdf_75%,#aeb4d4_100%)] shadow-[inset_0_0_0_1px_rgba(255,255,255,0.4)]">
          <BigComputer className="ml-[9px] h-[29px] w-8" />
          <span className="ml-[4px] -translate-y-px">计算机</span>
        </div>
        <div className="flex-1" />
        <svg className="mt-1 size-[17px]" viewBox="0 0 17 17">
          <path d="M3 0H7V5H3Z" fill="#e7e7e7" stroke="#777" strokeWidth=".7" />
          <path d="M1 4.500H9V10L7 13V16H4V13L1 10Z" fill="#747474" stroke="#555" strokeWidth=".5" />
          <circle cx="11" cy="10.500" r="5" fill="#30a92c" stroke="#1b7c1c" strokeWidth=".8" />
          <path d="M8.500 10.500L10.500 12.700L13.700 8.500" fill="none" stroke="#fff" strokeWidth="1.600" />
        </svg>
        <svg className="ml-[6px] size-[17px]" viewBox="0 0 17 17">
          <path d="M2 1V16" stroke="#3d4a5c" strokeWidth="3" />
          <path d="M2 1.500V15.500" stroke="#fff" strokeWidth="1.600" />
          <path d="M3 2H9V4Q12 6 15.500 4.500Q15.500 8 13 9.500Q10 10 8.500 8H3Z" fill="#fff" stroke="#485669" strokeWidth=".7" />
        </svg>
        <svg className="ml-[7px] size-[17px]" viewBox="0 0 17 17">
          <path d="M6 4H15V12.500H5Z" fill="#7e8fa6" stroke="#323e4e" strokeWidth="3" />
          <path d="M1.500 1V5H6.500V1M4 5V12.500H7M10.500 12.500V15M7 15H14" fill="none" stroke="#323e4e" strokeWidth="2.800" />
          <path d="M6 4H15V12.500H5Z" fill="#7e8fa6" stroke="#fff" strokeWidth="1.300" />
          <path d="M1.500 1V5H6.500V1M4 5V12.500H7M10.500 12.500V15M7 15H14" fill="none" stroke="#fff" strokeWidth="1.300" />
        </svg>
        <div className="ml-4 flex w-[50px] flex-col gap-px pt-px text-center tracking-[-0.4px]">
          <span>13:11</span>
          <span>2009/3/7</span>
        </div>
        <div className="ml-[9px] h-[38px] w-[15px] border border-[#414e60] bg-linear-to-br from-[#abb8c9] via-[#718198] to-[#5f7088]" />
      </div>

      <div className="absolute top-[680px] left-[78px] h-12 w-[106px] border border-b-0 border-[#303030] bg-[#1c1c1c]" />

      <div className="absolute top-[702px] left-[722px] flex h-[26px] w-[79px] items-center border-t border-black bg-linear-to-b from-[#a0a0a0] via-[#303030] via-45% to-[#111]">
        <svg className="h-[26px] w-full" viewBox="0 0 79 26">
          <path d="M4 5.500H13M4 9.500H13M4 13.500H13M4 17.500H13M4 21.500H13" stroke="#080808" strokeWidth="1.500" strokeDasharray="1.500 1.500" />
          <path d="M22 9.500L25 6.500H29L32 4.500" fill="none" stroke="#8a8a8a" />
          <rect x="19.500" y="10.500" width="14" height="8" rx="1" fill="#dcdcdc" stroke="#999" />
          <path d="M21 12.500H32M21 14.500H32" stroke="#555" strokeDasharray="1 1" />
          <path d="M23 16.500H30" stroke="#666" />
          <path d="M68 8H73V10H68ZM68 17H73L70.500 19.500Z" fill="#fff" />
        </svg>
        <Help className="absolute top-[4px] left-[41px] size-4" />
      </div>

      <svg className="absolute top-[743px] left-[173px] h-[25px] w-[18px]" viewBox="0 0 18 25">
        <path d="M1.500 1V18.500L5.500 14.800L9.500 24L13 22.500L9 13.800H15Z" fill="#fff" stroke="#15151f" strokeWidth="1.100" strokeLinejoin="round" />
      </svg>
    </div>
  );
}
